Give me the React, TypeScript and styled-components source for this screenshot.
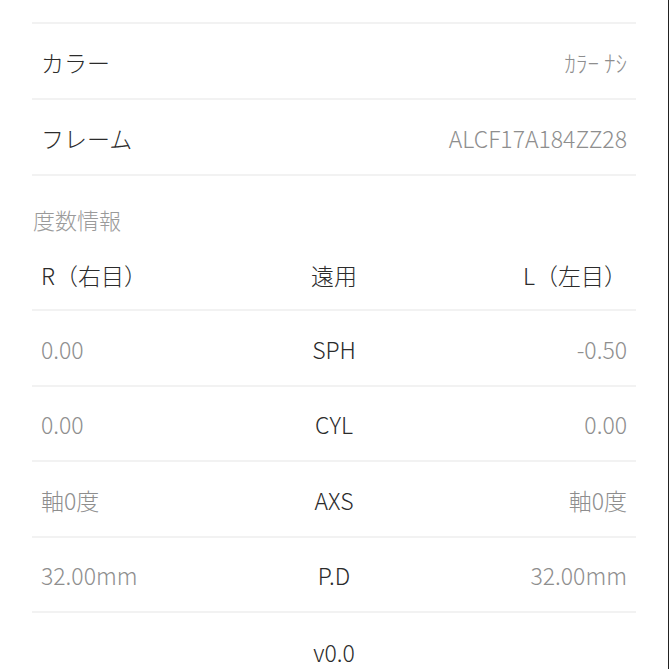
import React from "react";
import styled, { createGlobalStyle } from "styled-components";

const Global = createGlobalStyle`
  html, body { margin: 0; padding: 0; background: #fff; }
  body {
    font-family: "Noto Sans CJK JP", "Noto Sans", sans-serif;
    font-weight: 300;
    -webkit-font-smoothing: antialiased;
  }
  * { box-sizing: border-box; }
`;

const Page = styled.div`
  width: 669px;
  height: 669px;
  overflow: hidden;
  border-right: 1px solid #222;
  background: #fff;
`;

const Content = styled.div`
  margin: -52px 32px 0 32px;
  display: flex;
  flex-direction: column;
`;

const InfoRow = styled.div`
  height: 76px;
  padding: 2px 9px 0;
  display: flex;
  align-items: center;
  justify-content: space-between;
  border-bottom: 2px solid #f2f2f2;
`;

const Label = styled.span`
  font-size: 23px;
  color: #2b2b2b;
  line-height: 1;
`;

const Value = styled.span`
  font-size: 23px;
  color: #8e8e8e;
  line-height: 1;
`;

const SectionTitle = styled.div`
  padding: 30px 1px 7px;
  font-size: 22px;
  line-height: 26px;
  color: #9a9a9a;
`;

const GridRow = styled.div<{ $h?: number; $last?: boolean }>`
  height: ${(p) => p.$h ?? 75.5}px;
  padding: 3px 9px 0;
  display: grid;
  grid-template-columns: 1fr auto 1fr;
  align-items: center;
  border-bottom: ${(p) => (p.$last ? "none" : "2px solid #f2f2f2")};
`;

const Cell = styled.span<{ $align: "left" | "center" | "right"; $tone: "dark" | "muted" }>`
  text-align: ${(p) => p.$align};
  font-size: 23px;
  line-height: 1;
  color: ${(p) => (p.$tone === "dark" ? "#2b2b2b" : "#8e8e8e")};
  white-space: nowrap;
`;

const infos = [
  { label: "レンズ", value: "ー" },
  { label: "カラー", value: "ｶﾗｰ ﾅｼ" },
  { label: "フレーム", value: "ALCF17A184ZZ28" },
];

const rows = [
  { r: "0.00", k: "SPH", l: "-0.50" },
  { r: "0.00", k: "CYL", l: "0.00" },
  { r: "軸0度", k: "AXS", l: "軸0度" },
  { r: "32.00mm", k: "P.D", l: "32.00mm" },
  { r: "", k: "v0.0", l: "" },
];

export default function App() {
  return (
    <>
      <Global />
      <Page>
        <Content>
          {infos.map((i) => (
            <InfoRow key={i.label}>
              <Label>{i.label}</Label>
              <Value>{i.value}</Value>
            </InfoRow>
          ))}
          <SectionTitle>度数情報</SectionTitle>
          <GridRow $h={72}>
            <Cell $align="left" $tone="dark">R（右目）</Cell>
            <Cell $align="center" $tone="dark">遠用</Cell>
            <Cell $align="right" $tone="dark">L（左目）</Cell>
          </GridRow>
          {rows.map((r, idx) => (
            <GridRow key={r.k} $last={idx === rows.length - 1}>
              <Cell $align="left" $tone="muted">{r.r}</Cell>
              <Cell $align="center" $tone="dark">{r.k}</Cell>
              <Cell $align="right" $tone="muted">{r.l}</Cell>
            </GridRow>
          ))}
        </Content>
      </Page>
    </>
  );
}
